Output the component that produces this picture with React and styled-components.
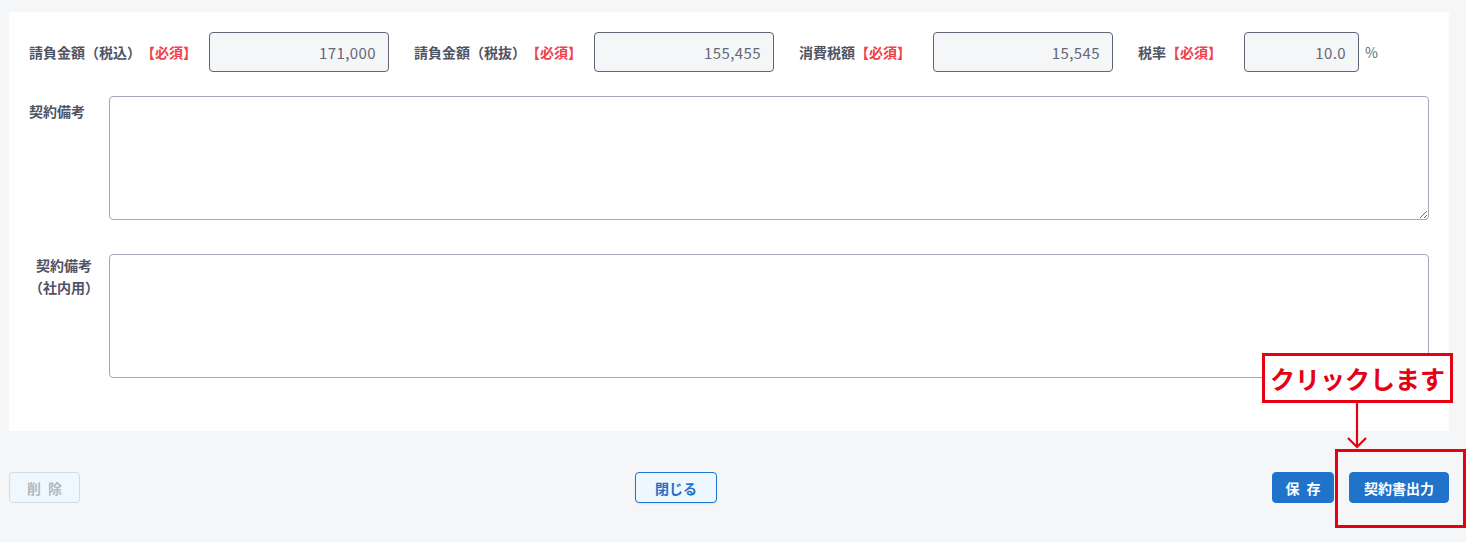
import React from "react";
import styled, { createGlobalStyle, css } from "styled-components";

const GlobalStyle = createGlobalStyle`
  html, body {
    margin: 0;
    padding: 0;
    background: #f5f6f8;
    font-family: "Noto Sans CJK JP", "Noto Sans", sans-serif;
    text-spacing-trim: space-all;
  }
  * { box-sizing: border-box; }
`;

const Page = styled.div`
  position: relative;
  min-height: 542px;
  padding: 12px 17px 0 9px;
`;

const Panel = styled.section`
  background: #ffffff;
  padding: 20px 20px 53px 20px;
`;

const AmountRow = styled.div`
  display: flex;
  align-items: center;
  gap: 25px;
`;

const Field = styled.div`
  display: flex;
  align-items: center;
  gap: 12px;
`;

const FieldLabel = styled.label`
  width: ${(p) => p.$width}px;
  font-size: 14px;
  font-weight: 700;
  color: #4f5464;
  white-space: nowrap;
  text-spacing-trim: space-all;
`;

const Required = styled.span`
  color: #f2404a;
`;

const AmountInput = styled.input`
  width: ${(p) => p.$width}px;
  height: 40px;
  padding: 0 12px;
  border: 1px solid #5f6477;
  border-radius: 4px;
  background: #f5f6f8;
  color: #646875;
  font-family: inherit;
  font-size: 15px;
  letter-spacing: 0.4px;
  text-align: right;
  outline: none;
`;

const Unit = styled.span`
  margin-left: -6px;
  font-size: 14px;
  color: #646875;
`;

const NoteRow = styled.div`
  display: flex;
  align-items: flex-start;
  margin-top: ${(p) => p.$offset}px;
`;

const NoteLabel = styled.label`
  flex: 0 0 80px;
  padding-right: 10px;
  padding-top: ${(p) => p.$top}px;
  font-size: 14px;
  font-weight: 700;
  line-height: 22px;
  color: #4f5464;
  text-align: ${(p) => p.$align};
  text-spacing-trim: space-all;
`;

const NoteArea = styled.textarea`
  flex: 1;
  height: 124px;
  border: 1px solid #a4a7b9;
  border-radius: 4px;
  background: #ffffff;
  font-family: inherit;
  font-size: 14px;
  outline: none;
  ${(p) =>
    p.$fixed &&
    css`
      resize: none;
    `}
`;

const Footer = styled.footer`
  display: flex;
  justify-content: space-between;
  align-items: center;
  padding-top: 41px;
`;

const ButtonGroup = styled.div`
  display: flex;
  align-items: center;
  gap: 15px;
`;

const variants = {
  disabled: css`
    background: #f0f8ff;
    border: 1px solid #d4dbe2;
    color: #b3b9bf;
  `,
  outline: css`
    background: #eef6ff;
    border: 1px solid #1f74cb;
    color: #1f6fc4;
    box-shadow: 0 1px 2px rgba(0, 0, 0, 0.08);
  `,
  primary: css`
    background: #1f74ca;
    border: 1px solid #1f74ca;
    color: #ffffff;
  `,
};

const Button = styled.button`
  width: ${(p) => p.$width}px;
  height: 31px;
  padding: 0;
  border-radius: 4px;
  font-family: inherit;
  font-size: 14px;
  font-weight: 700;
  word-spacing: 4px;
  cursor: pointer;
  ${(p) => variants[p.$variant]}
`;

/* red call-out drawn over the footer */
const Callout = styled.div`
  position: absolute;
  left: 1262px;
  top: 353px;
  width: 191px;
  height: 50px;
  border: 3px solid #e60012;
  background: #ffffff;
  display: flex;
  align-items: center;
  justify-content: center;
  color: #e60012;
  font-size: 25px;
  font-weight: 700;
`;

const Pointer = styled.svg`
  position: absolute;
  left: 1347px;
  top: 403px;
`;

const Highlight = styled.div`
  position: absolute;
  left: 1335px;
  top: 449px;
  width: 131px;
  height: 79px;
  border: 3px solid #e60012;
`;

const fields = [
  { label: "請負金額（税込）", labelWidth: 168, value: "171,000", inputWidth: 180 },
  { label: "請負金額（税抜）", labelWidth: 168, value: "155,455", inputWidth: 180 },
  { label: "消費税額", labelWidth: 122, value: "15,545", inputWidth: 180 },
  { label: "税率", labelWidth: 94, value: "10.0", inputWidth: 115, unit: "%" },
];

export default function App() {
  return (
    <>
      <GlobalStyle />
      <Page>
        <Panel>
          <AmountRow>
            {fields.map((f) => (
              <Field key={f.label}>
                <FieldLabel $width={f.labelWidth}>
                  {f.label}
                  <Required>【必須】</Required>
                </FieldLabel>
                <AmountInput $width={f.inputWidth} value={f.value} readOnly />
                {f.unit && <Unit>{f.unit}</Unit>}
              </Field>
            ))}
          </AmountRow>

          <NoteRow $offset={24}>
            <NoteLabel $align="left" $top={4}>契約備考</NoteLabel>
            <NoteArea />
          </NoteRow>

          <NoteRow $offset={34}>
            <NoteLabel $align="center" $top={0}>
              契約備考
              <br />
              （社内用）
            </NoteLabel>
            <NoteArea $fixed />
          </NoteRow>
        </Panel>

        <Footer>
          <Button $variant="disabled" $width={71} disabled>
            削 除
          </Button>
          <Button $variant="outline" $width={82}>
            閉じる
          </Button>
          <ButtonGroup>
            <Button $variant="primary" $width={62}>
              保 存
            </Button>
            <Button $variant="primary" $width={100}>
              契約書出力
            </Button>
          </ButtonGroup>
        </Footer>

        <Callout>クリックします</Callout>
        <Pointer width="20" height="46" viewBox="0 0 20 46">
          <path d="M10 0 V44 M1 35 L10 44 L19 35" fill="none" stroke="#e60012" strokeWidth="2.2" />
        </Pointer>
        <Highlight />
      </Page>
    </>
  );
}
